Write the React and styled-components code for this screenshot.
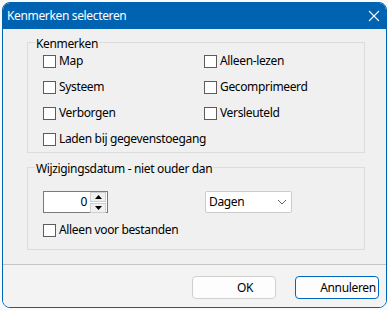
import React from "react";
import styled, { createGlobalStyle } from "styled-components";

const GlobalStyle = createGlobalStyle`
  html, body {
    margin: 0;
    padding: 0;
    background: #f9f9f9;
  }
  body {
    font-family: "Noto Sans", "Segoe UI", sans-serif;
    font-size: 12px;
    letter-spacing: -0.35px;
    color: #000;
  }
`;

const Window = styled.div`
  margin: 2px 0 0 2px;
  width: 383px;
  height: 304px;
  border: 1px solid #0063b1;
  border-radius: 8px;
  overflow: hidden;
  display: flex;
  flex-direction: column;
  background: #f0f0f0;
`;

const TitleBar = styled.div`
  height: 26px;
  background: #0063b1;
  color: #fff;
  display: flex;
  align-items: center;
  justify-content: space-between;
  padding: 0 6px 0 4px;
  flex-shrink: 0;
`;

const Title = styled.span`
  font-size: 12px;
  line-height: 16px;
`;

const CloseIcon = () => (
  <svg width="12" height="12" viewBox="0 0 12 12">
    <path d="M1 1 L11 11 M11 1 L1 11" stroke="#fff" strokeWidth="1.1" fill="none" />
  </svg>
);

const Body = styled.div`
  flex: 1;
  padding: 13px 21px 14px 24px;
  display: flex;
  flex-direction: column;
  gap: 14px;
`;

const Group = styled.div`
  border: 1px solid #dcdcdc;
  padding: 0 0 ${(p) => p.$bottom}px 15px;
`;

const Caption = styled.div`
  margin: -7px 0 0 -8px;
  width: fit-content;
  padding: 0 1px;
  line-height: 16px;
  background: #f0f0f0;
`;

const CheckGrid = styled.div`
  margin-top: -1px;
  display: grid;
  grid-template-columns: 161px 1fr;
  grid-auto-rows: 20px;
  row-gap: 6px;
`;

const CheckRow = styled.label`
  display: flex;
  align-items: center;
  gap: 3px;
  height: 20px;
  line-height: 16px;
  grid-column: ${(p) => (p.$wide ? "1 / span 2" : "auto")};
`;

const Box = styled.span`
  width: 11px;
  height: 11px;
  border: 1px solid #5c5c5c;
  background: #fff;
  flex-shrink: 0;
`;

const Check = ({ children, wide }) => (
  <CheckRow $wide={wide}>
    <Box />
    <span>{children}</span>
  </CheckRow>
);

const DateRow = styled.div`
  margin-top: 14px;
  display: grid;
  grid-template-columns: 162px 1fr;
  align-items: start;
`;

const Spin = styled.div`
  width: 63px;
  height: 20px;
  border: 1px solid #7a7a7a;
  background: #fff;
  display: flex;
  align-items: center;
`;

const SpinValue = styled.span`
  flex: 1;
  text-align: right;
  padding-right: 3px;
  line-height: 16px;
`;

const SpinButtons = styled.div`
  width: 16px;
  display: flex;
  flex-direction: column;
  gap: 1px;
  margin-right: 1px;
`;

const SpinButton = styled.div`
  height: 8px;
  border: 1px solid #cfcfcf;
  background: #f0f0f0;
  display: flex;
  align-items: center;
  justify-content: center;
`;

const Arrow = ({ up }) => (
  <svg width="7" height="4" viewBox="0 0 7 4">
    <path d={up ? "M0 4 L3.5 0 L7 4 Z" : "M0 0 L3.5 4 L7 0 Z"} fill="#000" />
  </svg>
);

const Select = styled.div`
  width: 82px;
  height: 20px;
  border: 1px solid #cccccc;
  border-radius: 2px;
  background: #fff;
  display: flex;
  align-items: center;
  justify-content: space-between;
  padding: 0 0 0 3px;
  line-height: 16px;
`;

const Chevron = () => (
  <svg width="10" height="6" viewBox="0 0 10 6" style={{ marginRight: 4 }}>
    <path d="M1 1 L5 5 L9 1" stroke="#606060" strokeWidth="1" fill="none" />
  </svg>
);

const SingleCheck = styled.div`
  margin-top: 7px;
`;

const Footer = styled.div`
  flex-shrink: 0;
  height: 42px;
  border-top: 1px solid #c4c4c4;
  background: #f3f3f3;
  display: flex;
  justify-content: flex-end;
  align-items: flex-start;
  gap: 19px;
  padding: 11px 7px 0 0;
`;

const Button = styled.button`
  width: 84px;
  height: 23px;
  padding: 0 0 0 22px;
  font: inherit;
  letter-spacing: inherit;
  line-height: 16px;
  color: #000;
  background: #fdfdfd;
  border: 1px solid ${(p) => (p.$primary ? "#0067c0" : "#d0d0d0")};
  border-radius: 4px;
`;

export default function App() {
  return (
    <>
      <GlobalStyle />
      <Window>
        <TitleBar>
          <Title>Kenmerken selecteren</Title>
          <CloseIcon />
        </TitleBar>
        <Body>
          <Group $bottom={3}>
            <Caption>Kenmerken</Caption>
            <CheckGrid>
              <Check>Map</Check>
              <Check>Alleen-lezen</Check>
              <Check>Systeem</Check>
              <Check>Gecomprimeerd</Check>
              <Check>Verborgen</Check>
              <Check>Versleuteld</Check>
              <Check wide>Laden bij gegevenstoegang</Check>
            </CheckGrid>
          </Group>
          <Group $bottom={9}>
            <Caption>Wijzigingsdatum - niet ouder dan</Caption>
            <DateRow>
              <Spin>
                <SpinValue>0</SpinValue>
                <SpinButtons>
                  <SpinButton>
                    <Arrow up />
                  </SpinButton>
                  <SpinButton>
                    <Arrow />
                  </SpinButton>
                </SpinButtons>
              </Spin>
              <Select>
                <span>Dagen</span>
                <Chevron />
              </Select>
            </DateRow>
            <SingleCheck>
              <Check>Alleen voor bestanden</Check>
            </SingleCheck>
          </Group>
        </Body>
        <Footer>
          <Button>OK</Button>
          <Button $primary>Annuleren</Button>
        </Footer>
      </Window>
    </>
  );
}
